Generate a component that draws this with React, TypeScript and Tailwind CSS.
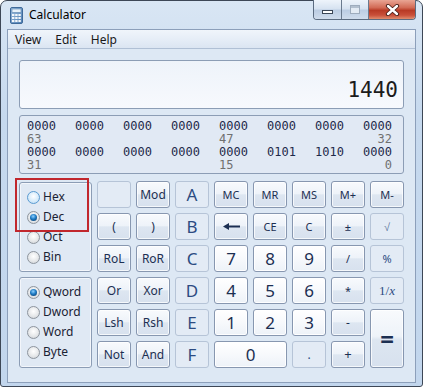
import React from "react";

type Kind = "op" | "num" | "off";

const kindClass: Record<Kind, string> = {
  op: "border-[#8797b0] bg-[linear-gradient(180deg,#f8fafd_0%,#eef3f9_46%,#dde6f1_52%,#d7e1ee_100%)] shadow-[inset_0_0_0_1px_rgba(255,255,255,0.75)] text-[#1c2f52]",
  num: "border-[#8797b0] bg-[linear-gradient(180deg,#ffffff_0%,#f7f9fc_50%,#edf2f8_100%)] shadow-[inset_0_0_0_1px_rgba(255,255,255,0.9)] text-[#1c2f52]",
  off: "border-[#b6c4d7] bg-[#e3ebf5] text-[#2c4b82]",
};

function Key({
  children,
  kind = "op",
  className = "",
}: {
  children?: React.ReactNode;
  kind?: Kind;
  className?: string;
}) {
  return (
    <div
      className={`flex items-center justify-center rounded-[3px] border leading-none ${kindClass[kind]} ${className}`}
    >
      {children}
    </div>
  );
}

function Radio({ label, checked, hover }: { label: string; checked?: boolean; hover?: boolean }) {
  return (
    <div className="flex h-5 items-center gap-[3px] pl-[7px] text-[12px] text-[#1a2233]">
      <span
        className={`flex h-[13px] w-[13px] items-center justify-center rounded-full border ${
          hover
            ? "border-[#5b9bd1] bg-[radial-gradient(circle_at_50%_40%,#ffffff_0%,#d8ecfb_55%,#b3d6f1_100%)]"
            : "border-[#8e959e] bg-[radial-gradient(circle_at_50%_40%,#ffffff_0%,#e6e8ea_55%,#c9cdd2_100%)]"
        }`}
      >
        {checked && (
          <span className="h-[7px] w-[7px] rounded-full bg-[radial-gradient(circle_at_45%_35%,#8fd0ff_0%,#1d7bc4_45%,#0b2f5a_100%)]" />
        )}
      </span>
      {label}
    </div>
  );
}

function BitRow({ bits }: { bits: string[] }) {
  return (
    <div className="flex h-[13px] w-[365px] justify-between text-[#1e2a4a]">
      {bits.map((b, i) => (
        <span key={i} className="w-[29px]">
          {b}
        </span>
      ))}
    </div>
  );
}

function LabelRow({ a, b, c }: { a: string; b: string; c: string }) {
  return (
    <div className="flex h-[13px] w-[365px] justify-between text-[#707070]">
      <span className="w-[29px]">{a}</span>
      <span className="w-[29px]" />
      <span className="w-[29px]" />
      <span className="w-[29px]" />
      <span className="w-[29px]">{b}</span>
      <span className="w-[29px]" />
      <span className="w-[29px]" />
      <span className="w-[29px] text-right">{c}</span>
    </div>
  );
}

function CalcIcon() {
  return (
    <svg width="13" height="17" viewBox="0 0 13 17">
      <defs>
        <linearGradient id="cb" x1="0" y1="0" x2="1" y2="1">
          <stop offset="0" stopColor="#9fc0e0" />
          <stop offset="1" stopColor="#4f7fb3" />
        </linearGradient>
      </defs>
      <rect x="0.5" y="0.5" width="12" height="16" rx="1.5" fill="url(#cb)" stroke="#3f6a9a" />
      <rect x="2" y="2" width="9" height="3.5" fill="#e9f3fb" stroke="#5b84b0" strokeWidth="0.6" />
      {[0, 1, 2].map((r) =>
        [0, 1, 2].map((c) => (
          <rect key={`${r}${c}`} x={2 + c * 3.2} y={7 + r * 3} width="2.4" height="2" fill="#f3f7fb" />
        ))
      )}
    </svg>
  );
}

export default function App() {
  return (
    <div className="h-[388px] w-[423px] bg-white font-['Noto_Sans',sans-serif]">
      <div className="relative flex h-[387px] w-[423px] flex-col rounded-t-[7px] rounded-b-[3px] border border-[#3d4756] bg-[linear-gradient(180deg,#d9e6f4_0%,#c6d9ee_30%,#c2d6ed_100%)]">
        {/* title bar */}
        <div className="flex h-[28px] items-center">
          <div className="ml-[9px] flex items-center">
            <CalcIcon />
          </div>
          <span className="ml-[6px] text-[12px] text-black">Calculator</span>
          <div className="ml-auto mr-[6px] flex h-[20px] self-start -mt-px overflow-hidden rounded-b-[4px] border border-t-0 border-[#5b6b80]">
            <div className="flex w-[28px] items-end justify-center border-r border-[#6a7a8e] bg-[linear-gradient(180deg,#eef4fb_0%,#d7e3f1_45%,#bccde3_55%,#cfdcec_100%)] pb-[5px]">
              <span className="h-[4px] w-[11px] border border-[#3a4656] bg-white" />
            </div>
            <div className="flex w-[27px] items-center justify-center border-r border-[#6a7a8e] bg-[linear-gradient(180deg,#eef4fb_0%,#d7e3f1_45%,#bccde3_55%,#cfdcec_100%)]">
              <span className="h-[9px] w-[10px] border border-[#9eacbd] bg-[#e3ebf4] shadow-[inset_0_2px_0_#b3c0cf]" />
            </div>
            <div className="flex w-[46px] items-center justify-center bg-[linear-gradient(180deg,#e9a594_0%,#d26a55_40%,#b83a25_55%,#c9503a_80%,#e08d6e_100%)]">
              <svg width="15" height="12" viewBox="0 0 15 12">
                <path d="M3 2 L12 10 M12 2 L3 10" stroke="#4a1f18" strokeWidth="4.2" strokeLinecap="round" />
                <path d="M3 2 L12 10 M12 2 L3 10" stroke="#ffffff" strokeWidth="2.4" strokeLinecap="round" />
              </svg>
            </div>
          </div>
        </div>

        {/* client area */}
        <div className="mx-[6px] flex h-[354px] flex-col border border-[#8c9fba] bg-[#dde8f4]">
          <div className="flex h-[19px] items-center gap-[14px] border-b border-[#b0c0d5] bg-[linear-gradient(180deg,#f0f5fb_0%,#e4ecf6_60%,#dbe5f2_100%)] pl-[7px] pt-[2px] text-[12px] text-[#1a1a1a]">
            <span>View</span>
            <span>Edit</span>
            <span>Help</span>
          </div>

          <div className="flex flex-col pl-[11px] pt-[11px]">
            <div className="flex h-[49px] w-[385px] items-end justify-end rounded-[3px] border border-[#8c9db5] bg-[linear-gradient(180deg,#eef3fa_0%,#f7f9fd_100%)] pb-[7px] pr-[5px] font-['DejaVu_Sans_Mono',monospace] text-[21px] leading-none text-[#1b1b1b]">
              1440
            </div>

            <div className="mt-[6px] flex h-[59px] w-[385px] flex-col rounded-[3px] border border-[#8c9db5] bg-[#e1e9f4] pl-[7px] pt-[4px] font-['DejaVu_Sans_Mono',monospace] text-[12px] leading-[13px]">
              <BitRow bits={["0000", "0000", "0000", "0000", "0000", "0000", "0000", "0000"]} />
              <LabelRow a="63" b="47" c="32" />
              <BitRow bits={["0000", "0000", "0000", "0000", "0000", "0101", "1010", "0000"]} />
              <LabelRow a="31" b="15" c="0" />
            </div>

            <div className="mt-[7px] grid grid-cols-[73px_repeat(8,34px)] grid-rows-[repeat(6,27px)] gap-[5px]">
              <div className="row-span-3 mt-px rounded-[3px] border border-[#8c9db5] bg-[#e0e9f4] pt-[4px] shadow-[inset_0_0_0_1px_rgba(255,255,255,0.6)]">
                <Radio label="Hex" hover />
                <Radio label="Dec" checked />
                <Radio label="Oct" />
                <Radio label="Bin" />
              </div>
              <Key kind="off" />
              <Key className="text-[12px]">Mod</Key>
              <Key kind="off" className="text-[17px]">A</Key>
              <Key className="text-[11px]">MC</Key>
              <Key className="text-[11px]">MR</Key>
              <Key className="text-[11px]">MS</Key>
              <Key className="text-[11px]">M+</Key>
              <Key className="text-[11px]">M-</Key>

              <Key className="text-[12px]">(</Key>
              <Key className="text-[12px]">)</Key>
              <Key kind="off" className="text-[17px]">B</Key>
              <Key>
                <svg width="17" height="7" viewBox="0 0 17 7">
                  <path d="M5 3.5 H17" stroke="#1c2f52" strokeWidth="2" />
                  <path d="M0 3.5 L6 0 L6 7 Z" fill="#1c2f52" />
                </svg>
              </Key>
              <Key className="text-[11px]">CE</Key>
              <Key className="text-[11px]">C</Key>
              <Key className="text-[11px]">±</Key>
              <Key kind="off" className="text-[11px] text-[#5d76a0]">√</Key>

              <Key className="text-[12px]">RoL</Key>
              <Key className="text-[12px]">RoR</Key>
              <Key kind="off" className="text-[17px]">C</Key>
              <Key kind="num" className="text-[17px]">7</Key>
              <Key kind="num" className="text-[17px]">8</Key>
              <Key kind="num" className="text-[17px]">9</Key>
              <Key className="text-[11px]">/</Key>
              <Key kind="off" className="text-[11px]">%</Key>

              <div className="row-span-3 rounded-[3px] border border-[#8c9db5] bg-[#e0e9f4] pt-[4px] shadow-[inset_0_0_0_1px_rgba(255,255,255,0.6)]">
                <Radio label="Qword" checked />
                <Radio label="Dword" />
                <Radio label="Word" />
                <Radio label="Byte" />
              </div>
              <Key className="text-[12px]">Or</Key>
              <Key className="text-[12px]">Xor</Key>
              <Key kind="off" className="text-[17px]">D</Key>
              <Key kind="num" className="text-[17px]">4</Key>
              <Key kind="num" className="text-[17px]">5</Key>
              <Key kind="num" className="text-[17px]">6</Key>
              <Key className="text-[11px]">*</Key>
              <Key kind="off" className="font-['Liberation_Serif',serif] text-[13px]">
                1/<i>x</i>
              </Key>

              <Key className="text-[12px]">Lsh</Key>
              <Key className="text-[12px]">Rsh</Key>
              <Key kind="off" className="text-[17px]">E</Key>
              <Key kind="num" className="text-[17px]">1</Key>
              <Key kind="num" className="text-[17px]">2</Key>
              <Key kind="num" className="text-[17px]">3</Key>
              <Key className="text-[12px]">-</Key>
              <Key className="row-span-2 text-[24px] font-bold">=</Key>

              <Key className="text-[12px]">Not</Key>
              <Key className="text-[12px]">And</Key>
              <Key kind="off" className="text-[17px]">F</Key>
              <Key kind="num" className="col-span-2 text-[17px]">0</Key>
              <Key kind="off" className="text-[12px]">.</Key>
              <Key className="text-[13px]">+</Key>
            </div>
          </div>
        </div>

        {/* annotation */}
        <div className="absolute left-[14px] top-[177px] h-[54px] w-[74px] border-2 border-[#c1272d]" />
      </div>
    </div>
  );
}
